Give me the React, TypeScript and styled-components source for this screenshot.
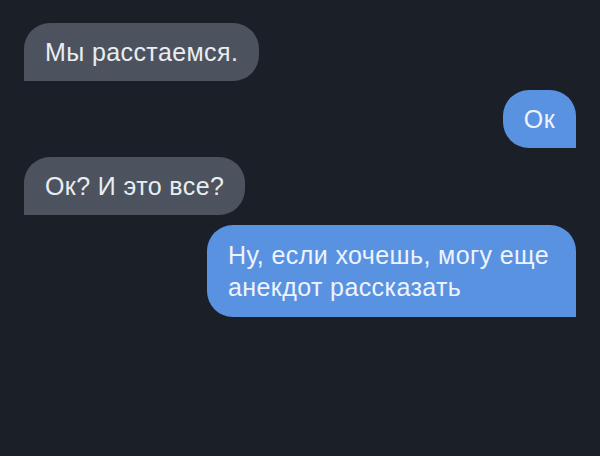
import React from "react";
import styled, { createGlobalStyle } from "styled-components";

const Global = createGlobalStyle`
  html, body { margin: 0; padding: 0; background: #1b2028; }
  body { width: 600px; height: 456px; overflow: hidden; }
`;

const Chat = styled.div`
  box-sizing: border-box;
  width: 600px;
  height: 456px;
  background: #1b2028;
  padding: 23px 24px 0 24px;
  display: flex;
  flex-direction: column;
  gap: 9px;
  font-family: "Liberation Sans", Arial, sans-serif;
`;

const Bubble = styled.div<{ $mine?: boolean; $tall?: boolean }>`
  box-sizing: border-box;
  align-self: ${(p) => (p.$mine ? "flex-end" : "flex-start")};
  max-width: 369px;
  padding: ${(p) => (p.$tall ? "14px 21px" : "13px 21px")};
  margin-top: ${(p) => (p.$tall ? "1px" : "0")};
  font-size: 25px;
  letter-spacing: 0.4px;
  line-height: 32px;
  color: ${(p) => (p.$mine ? "#eef4ff" : "#e9edf2")};
  background: ${(p) => (p.$mine ? "#5a92e2" : "#4c535e")};
  border-radius: ${(p) => (p.$mine ? "26px 26px 0 26px" : "26px 26px 26px 0")};
`;

export default function App() {
  return (
    <>
      <Global />
      <Chat>
        <Bubble>Мы расстаемся.</Bubble>
        <Bubble $mine>Ок</Bubble>
        <Bubble>Ок? И это все?</Bubble>
        <Bubble $mine $tall>
          Ну, если хочешь, могу еще анекдот рассказать
        </Bubble>
      </Chat>
    </>
  );
}
